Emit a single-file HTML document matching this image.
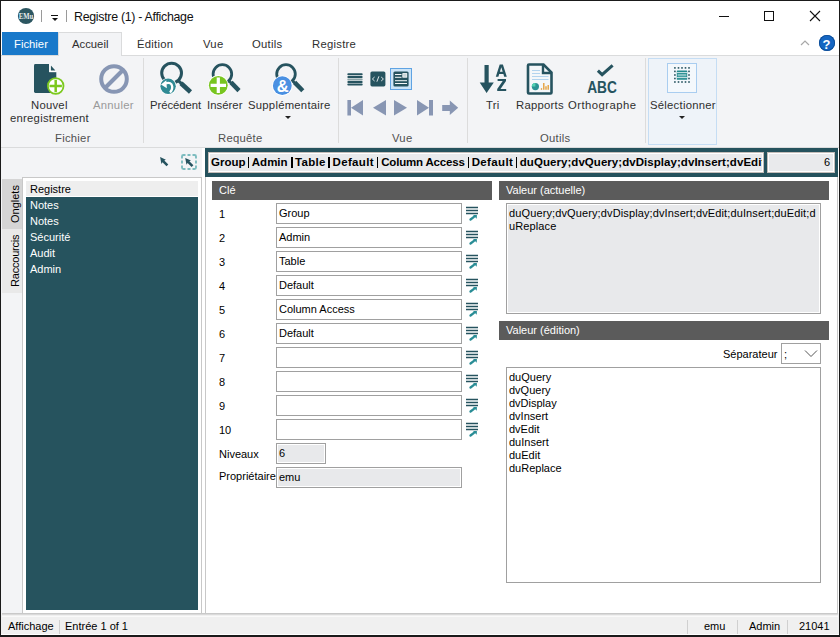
<!DOCTYPE html>
<html><head><meta charset="utf-8">
<style>
*{margin:0;padding:0;box-sizing:border-box}
html,body{width:840px;height:637px;overflow:hidden;background:#fff}
body{position:relative;font-family:"Liberation Sans",sans-serif;font-size:12px;color:#222}
.a{position:absolute}
.t{position:absolute;white-space:nowrap;line-height:1}
.ui{font-size:11.3px;letter-spacing:0.25px;color:#2f2f2f}
.f{font-size:11px;color:#000}
.w{color:#fff}
.tb{position:absolute;border:1px solid #a0a0a0;background:#fff}
.gray{background:#e8e9eb;box-shadow:inset 0 0 0 1px #fff}
.hdr{position:absolute;background:#5b5b5b;height:19px}
</style></head><body>
<!-- window border -->
<div class="a" style="left:0;top:0;width:840px;height:637px;border-left:1px solid #1a1a1a;border-top:1px solid #1a1a1a;border-right:1px solid #1a1a1a;border-bottom:2px solid #1a1a1a"></div>

<!-- title bar -->
<svg class="a" style="left:17px;top:7px" width="18" height="18" viewBox="0 0 18 18"><circle cx="9" cy="9" r="8.1" fill="#2c5661"/><text x="1.8" y="12" font-family="Liberation Serif" font-weight="bold" font-size="8.5" fill="#e8eeee" textLength="14.4" lengthAdjust="spacingAndGlyphs">EMu</text></svg>

<div class="a" style="left:41px;top:10px;width:1px;height:12px;background:#9a9a9a"></div>
<div class="a" style="left:51px;top:15px;width:7px;height:1px;background:#111"></div>
<div class="a" style="left:51.5px;top:18px;width:0;height:0;border-left:3px solid transparent;border-right:3px solid transparent;border-top:3px solid #111"></div>
<div class="a" style="left:66px;top:10px;width:1px;height:12px;background:#9a9a9a"></div>
<div class="t" style="left:74px;top:11px;font-size:12.4px;letter-spacing:-0.3px;color:#111">Registre (1) - Affichage</div>
<!-- window controls -->
<div class="a" style="left:719px;top:16px;width:10px;height:1px;background:#111"></div>
<div class="a" style="left:764px;top:11px;width:10px;height:10px;border:1px solid #111"></div>
<svg class="a" style="left:809px;top:10px" width="12" height="12" viewBox="0 0 12 12"><path d="M1 1L11 11M11 1L1 11" stroke="#111" stroke-width="1.1"/></svg>

<!-- ribbon tabs -->
<div class="a" style="left:2px;top:32px;width:56px;height:23px;background:#1979ca"></div>
<div class="t ui" style="left:14px;top:39px;color:#fff;letter-spacing:0">Fichier</div>
<div class="a" style="left:58px;top:32px;width:64px;height:24px;background:#f3f4f6;border:1px solid #dadbdc;border-bottom:none"></div>
<div class="t ui" style="left:72px;top:39px;letter-spacing:0">Accueil</div>
<div class="t ui" style="left:137px;top:39px">Édition</div>
<div class="t ui" style="left:203px;top:39px">Vue</div>
<div class="t ui" style="left:252px;top:39px">Outils</div>
<div class="t ui" style="left:312px;top:39px">Registre</div>
<svg class="a" style="left:800px;top:39px" width="10" height="8" viewBox="0 0 10 8"><path d="M1 6L5 2L9 6" stroke="#a8a8a8" stroke-width="1.2" fill="none"/></svg>
<div class="a" style="left:819px;top:35px;width:16px;height:16px;border-radius:50%;background:#1566c2;box-shadow:inset 0 0 0 0.8px #0b4a94"></div>
<div class="t" style="left:822.5px;top:38px;font-size:13px;font-weight:bold;color:#fff">?</div>

<!-- ribbon body -->
<div class="a" style="left:1px;top:55px;width:838px;height:93px;background:#f3f4f6;border-top:1px solid #dadbdc;border-bottom:1px solid #dadbdc"></div>
<div class="a" style="left:58px;top:55px;width:64px;height:1px;background:#f3f4f6;border-left:1px solid #dadbdc;border-right:1px solid #dadbdc"></div>
<!-- group separators -->
<div class="a" style="left:143px;top:58px;width:1px;height:85px;background:#dcdcdc"></div>
<div class="a" style="left:338px;top:58px;width:1px;height:85px;background:#dcdcdc"></div>
<div class="a" style="left:467px;top:58px;width:1px;height:85px;background:#dcdcdc"></div>
<div class="a" style="left:645px;top:58px;width:1px;height:85px;background:#dcdcdc"></div>
<!-- group labels -->
<div class="t ui" style="left:55px;top:133px;color:#505050">Fichier</div>
<div class="t ui" style="left:218px;top:133px;color:#505050">Requête</div>
<div class="t ui" style="left:392px;top:133px;color:#505050">Vue</div>
<div class="t ui" style="left:540px;top:133px;color:#505050">Outils</div>

<!-- Fichier group -->
<svg class="a" style="left:30px;top:60px" width="40" height="38" viewBox="0 0 40 38">
  <path d="M5.4 4H19.2L26.3 11.9V31.6Q26.3 33 24.9 33H5.4Q4 33 4 31.6V5.4Q4 4 5.4 4Z" fill="#26535f"/>
  <path d="M19.2 3.5L26.8 3.5V12.2H19.2Z" fill="#f3f4f6"/>
  <path d="M19.2 4H19.9L26.3 11.2V12H19.2Z" fill="#fff"/>
  <path d="M20.9 5.4L25.4 10.5H20.9Z" fill="#26535f"/>
  <circle cx="25.7" cy="26" r="7.8" fill="#fff" stroke="#7cc91f" stroke-width="1.8"/>
  <path d="M25.7 19.8V32.2M19.5 26H31.9" stroke="#7cc91f" stroke-width="2.5"/>
</svg>
<div class="t ui" style="left:31px;top:100px">Nouvel</div>
<div class="t ui" style="left:10px;top:113px">enregistrement</div>
<svg class="a" style="left:97px;top:62px" width="34" height="34" viewBox="0 0 34 34">
  <circle cx="17" cy="17" r="12.8" fill="none" stroke="#8796b4" stroke-width="4"/>
  <path d="M25.5 8.5L8.5 25.5" stroke="#8796b4" stroke-width="4"/>
</svg>
<div class="t ui" style="left:93px;top:100px;color:#9a9a9a">Annuler</div>

<!-- Requete group -->
<svg class="a" style="left:156px;top:60px" width="40" height="36" viewBox="0 0 40 36">
  <circle cx="15.6" cy="13.1" r="9.9" fill="none" stroke="#26535f" stroke-width="3"/>
  <path d="M21.5 19.8L25.5 23.6" stroke="#26535f" stroke-width="3"/>
  <path d="M25 23.3L34.5 32" stroke="#26535f" stroke-width="4.6"/>
  <circle cx="12.1" cy="26.3" r="8.4" fill="#fff"/>
  <circle cx="12.1" cy="26.3" r="7.7" fill="#2f8a94"/>
  <path d="M9.5 23.3Q15.5 21.5 16.2 26.5Q16.6 30 14 32.5" stroke="#fff" stroke-width="2.3" fill="none"/>
  <path d="M5 24.6L10.3 20.2L10.8 28.2Z" fill="#fff"/>
</svg>
<div class="t ui" style="left:150px;top:100px;letter-spacing:-0.05px">Précédent</div>
<svg class="a" style="left:206px;top:60px" width="40" height="36" viewBox="0 0 40 36">
  <circle cx="16.4" cy="14" r="9.3" fill="none" stroke="#26535f" stroke-width="2.8"/>
  <path d="M22.4 20.3L25.6 23.4" stroke="#26535f" stroke-width="2.8"/>
  <path d="M25 22.4L33 30.6" stroke="#26535f" stroke-width="4.4"/>
  <circle cx="12.3" cy="25.3" r="10.2" fill="#fff"/>
  <circle cx="12.3" cy="25.3" r="9.4" fill="#78c520"/>
  <path d="M12.3 17.6V33M4.6 25.3H20" stroke="#fff" stroke-width="3.2"/>
</svg>
<div class="t ui" style="left:207px;top:100px;letter-spacing:0.05px">Insérer</div>
<svg class="a" style="left:270px;top:60px" width="40" height="36" viewBox="0 0 40 36">
  <circle cx="16" cy="14" r="9.3" fill="none" stroke="#26535f" stroke-width="2.8"/>
  <path d="M22 20.3L25.2 23.4" stroke="#26535f" stroke-width="2.8"/>
  <path d="M24.6 22.4L32.8 30.8" stroke="#26535f" stroke-width="4.4"/>
  <circle cx="12.3" cy="25.7" r="10.2" fill="#fff"/>
  <circle cx="12.3" cy="25.7" r="9.4" fill="#4a90e2"/>
  <text x="12.6" y="31.6" text-anchor="middle" font-family="Liberation Sans" font-weight="bold" font-size="16.5" fill="#fff">&amp;</text>
</svg>
<div class="t ui" style="left:248px;top:100px">Supplémentaire</div>
<div class="a" style="left:285px;top:116px;width:0;height:0;border-left:3px solid transparent;border-right:3px solid transparent;border-top:3px solid #222"></div>

<!-- Vue group -->
<svg class="a" style="left:347px;top:72px" width="16" height="14" viewBox="0 0 16 14">
  <rect x="0.3" y="1.2" width="15.4" height="2" rx="1" fill="#26535f"/>
  <rect x="0.3" y="3.9" width="15.4" height="2" rx="1" fill="#26535f"/>
  <rect x="0.3" y="6.5" width="15.4" height="1.9" rx="0.9" fill="#8aa2a6"/>
  <rect x="0.3" y="8.9" width="15.4" height="2" rx="1" fill="#26535f"/>
  <rect x="0.3" y="11.5" width="15.4" height="2" rx="1" fill="#26535f"/>
</svg>
<svg class="a" style="left:370px;top:71px" width="16" height="16" viewBox="0 0 16 16">
  <rect x="0.4" y="0.4" width="15" height="15" rx="1.6" fill="#26535f"/>
  <path d="M4.6 6L2.4 8L4.6 10M11.2 6L13.4 8L11.2 10M8.9 5.3L6.9 10.7" stroke="#fff" stroke-width="0.85" fill="none"/>
</svg>
<div class="a" style="left:390px;top:68px;width:22px;height:22px;background:#cce4f7;border:1px solid #5fa3e3"></div>
<svg class="a" style="left:393px;top:71px" width="16" height="16" viewBox="0 0 16 16">
  <rect x="0.4" y="0.5" width="15.2" height="15" rx="1.5" fill="#26535f"/>
  <path d="M2 3.5H8.5M2 6.3H8.5M2 9.7H14M2 12.5H14" stroke="#fff" stroke-width="0.95"/>
  <rect x="9.8" y="2.6" width="4" height="3.6" fill="#c9d6d9" stroke="#fff" stroke-width="0.8"/>
</svg>
<svg class="a" style="left:345px;top:98px" width="120" height="20" viewBox="0 0 120 20">
  <rect x="2.4" y="2" width="3.6" height="15.5" fill="#8896b3"/>
  <path d="M6 9.75L18 2V17.5Z" fill="#8896b3"/>
  <path d="M28 9.75L41 2V17.5Z" fill="#8896b3"/>
  <path d="M49 2L62 9.75L49 17.5Z" fill="#8896b3"/>
  <path d="M72 2L84 9.75L72 17.5Z" fill="#8896b3"/>
  <rect x="84" y="2" width="4" height="15.5" fill="#8896b3"/>
  <path d="M97.2 6.9H104.8V2.5L113.2 9.75L104.8 17V12.9H97.2Z" fill="#8896b3"/>
</svg>

<!-- Outils group -->
<svg class="a" style="left:477px;top:62px" width="34" height="34" viewBox="0 0 34 34">
  <path d="M7.5 3H11.7V20.6H16.8L9.6 31L2.7 20.6H7.5Z" fill="#26535f"/>
  <path d="M18.8 14.7L22.7 2.5H25.9L29.8 14.7H27.2L26.4 12.1H22.2L21.4 14.7ZM22.9 9.8H25.7L24.3 5.2Z" fill="#26535f"/>
  <path d="M20.6 16.9H29V19L23.5 26.9H29.2V29.1H20.2V27L25.7 19.1H20.6Z" fill="#26535f"/>
</svg>
<div class="t ui" style="left:486px;top:100px">Tri</div>
<svg class="a" style="left:526px;top:62px" width="28" height="34" viewBox="0 0 28 34">
  <path d="M3 2.5H17.5L25.5 10.5V30.5Q25.5 31.5 24.5 31.5H3Q2 31.5 2 30.5V3.5Q2 2.5 3 2.5Z" fill="#f4f7f9" stroke="#26535f" stroke-width="2.6"/>
  <path d="M17 2.5V11H25.5" fill="none" stroke="#26535f" stroke-width="2.4"/>
  <path d="M6 8.5H14M6 11.5H14M6 14.5H22.5M6 17.5H22.5" stroke="#b3d4ee" stroke-width="1"/>
  <circle cx="9.4" cy="24.6" r="3.6" fill="#2a9393"/>
  <path d="M9.4 24.6H5.8A3.6 3.6 0 0 1 9.4 21Z" fill="#52d2b2"/>
  <path d="M15.5 27.8V26.3M17.8 27.8V21M20 27.8V24.3M22.2 27.8V23" stroke="#e39a2e" stroke-width="1.3"/>
</svg>
<div class="t ui" style="left:516px;top:100px">Rapports</div>
<svg class="a" style="left:585px;top:62px" width="34" height="34" viewBox="0 0 34 34">
  <path d="M12.9 8.7L17.1 12.6L27.6 3.3" stroke="#26535f" stroke-width="3.1" fill="none"/>
  <text x="2.2" y="31" font-family="Liberation Sans" font-weight="bold" font-size="15.6" fill="#26535f" textLength="29.7" lengthAdjust="spacingAndGlyphs" transform="translate(0 -2.9) scale(1 1.11)">ABC</text>
</svg>
<div class="t ui" style="left:568px;top:100px;letter-spacing:0.45px">Orthographe</div>

<!-- Selectionner -->
<div class="a" style="left:648px;top:58px;width:69px;height:87px;background:#eef3f9;border:1px solid #c5ddf4"></div>
<div class="a" style="left:667px;top:63px;width:30px;height:30px;background:#f4f8fc;border:1px solid #a9cdf0"></div>
<svg class="a" style="left:673px;top:66px" width="18" height="18" viewBox="0 0 18 18"><rect x="1.0999999999999999" y="1.0999999999999999" width="1.6" height="1.6" fill="#26535f"/><rect x="1.0999999999999999" y="15.2" width="1.6" height="1.6" fill="#26535f"/><rect x="4.7" y="1.0999999999999999" width="1.6" height="1.6" fill="#26535f"/><rect x="4.7" y="15.2" width="1.6" height="1.6" fill="#26535f"/><rect x="8.2" y="1.0999999999999999" width="1.6" height="1.6" fill="#26535f"/><rect x="8.2" y="15.2" width="1.6" height="1.6" fill="#26535f"/><rect x="11.7" y="1.0999999999999999" width="1.6" height="1.6" fill="#26535f"/><rect x="11.7" y="15.2" width="1.6" height="1.6" fill="#26535f"/><rect x="15.2" y="1.0999999999999999" width="1.6" height="1.6" fill="#26535f"/><rect x="15.2" y="15.2" width="1.6" height="1.6" fill="#26535f"/><rect x="1.0999999999999999" y="4.6000000000000005" width="1.6" height="1.6" fill="#26535f"/><rect x="15.2" y="4.6000000000000005" width="1.6" height="1.6" fill="#26535f"/><rect x="1.0999999999999999" y="8.2" width="1.6" height="1.6" fill="#26535f"/><rect x="15.2" y="8.2" width="1.6" height="1.6" fill="#26535f"/><rect x="1.0999999999999999" y="11.7" width="1.6" height="1.6" fill="#26535f"/><rect x="15.2" y="11.7" width="1.6" height="1.6" fill="#26535f"/>
  <rect x="3.8" y="4.4" width="10.4" height="9.4" rx="0.6" fill="#238a8e"/>
  <path d="M3.8 6.6H14.2M3.8 11.6H14.2" stroke="#e6f1f2" stroke-width="0.9"/>
  <rect x="4.6" y="8" width="8.8" height="2.4" fill="#83c1c2"/>
</svg>
<div class="t ui" style="left:650px;top:100px">Sélectionner</div>
<div class="a" style="left:679px;top:116px;width:0;height:0;border-left:3px solid transparent;border-right:3px solid transparent;border-top:3px solid #222"></div>

<!-- below ribbon: left sidebar area -->
<div class="a" style="left:1px;top:148px;width:201px;height:466px;background:#f3f4f6"></div>
<div class="a" style="left:202px;top:148px;width:3px;height:466px;background:#fff"></div>
<svg class="a" style="left:159px;top:156px" width="12" height="12" viewBox="0 0 12 12"><path d="M1.1 1.1L6.9 3.7L5.3 4.5L9.3 8.5L7.5 10.3L3.5 6.3L2.4 7.9Z" fill="#26535f"/></svg>
<svg class="a" style="left:180px;top:153px" width="18" height="18" viewBox="0 0 18 18">
  <path d="M2 5.5V3.5Q2 2 3.5 2H5.5M7.5 2H10.5M12.5 2H14.5Q16 2 16 3.5V5.5M16 7.5V10.5M16 12.5V14.5Q16 16 14.5 16H12.5M10.5 16H7.5M5.5 16H3.5Q2 16 2 14.5V12.5M2 10.5V7.5" stroke="#7dbcbf" stroke-width="1.9" fill="none"/>
  <path d="M1.1 1.1L6.9 3.7L5.3 4.5L9.3 8.5L7.5 10.3L3.5 6.3L2.4 7.9Z" transform="translate(4.1 3.8)" fill="#26535f"/>
</svg>
<!-- vertical tabs -->
<div class="a" style="left:2px;top:179px;width:20px;height:50px;background:#d5d5d5"></div>
<div class="a" style="left:2px;top:229px;width:20px;height:64px;background:#e9e9e9"></div>
<div class="t f" style="left:10px;top:222.5px;transform-origin:0 0;transform:rotate(-90deg)">Onglets</div>
<div class="t f" style="left:10px;top:287px;transform-origin:0 0;transform:rotate(-90deg);letter-spacing:-0.2px">Raccourcis</div>
<!-- list panel -->
<div class="a" style="left:22px;top:177px;width:180px;height:437px;background:#fff;border-left:1px solid #c8c8c8;border-top:1px solid #c8c8c8;border-right:1px solid #c8c8c8"></div>
<div class="a" style="left:26px;top:181px;width:172px;height:15px;background:#eeeeee"></div>
<div class="a" style="left:26px;top:197px;width:172px;height:413px;background:#26535e"></div>
<div class="t f" style="left:30px;top:184px">Registre</div>
<div class="t f w" style="left:30px;top:200px">Notes</div>
<div class="t f w" style="left:30px;top:216px">Notes</div>
<div class="t f w" style="left:30px;top:232px">Sécurité</div>
<div class="t f w" style="left:30px;top:248px">Audit</div>
<div class="t f w" style="left:30px;top:264px">Admin</div>

<!-- address bar -->
<div class="a" style="left:205px;top:148px;width:633px;height:29px;background:#25525d"></div>
<div class="a" style="left:208px;top:152px;width:556px;height:21px;background:#c4bdb9;padding:1px"><div style="width:100%;height:100%;background:#e9eaec;border:1px solid #fff"></div></div>
<div class="a" style="left:211px;top:154px;width:551px;height:17px;overflow:hidden">
<div class="t" style="left:-0.0px;top:3px;font-size:11.5px;font-weight:bold;color:#000">Group</div>
<div class="t" style="left:40.8px;top:3px;font-size:11.5px;font-weight:bold;color:#000;letter-spacing:0px">Admin</div>
<div class="t" style="left:84.0px;top:3px;font-size:11.5px;font-weight:bold;color:#000;letter-spacing:0.3px">Table</div>
<div class="t" style="left:121.5px;top:3px;font-size:11.5px;font-weight:bold;color:#000;letter-spacing:0.35px">Default</div>
<div class="t" style="left:170.2px;top:3px;font-size:11.5px;font-weight:bold;color:#000;letter-spacing:-0.18px">Column Access</div>
<div class="t" style="left:260.7px;top:3px;font-size:11.5px;font-weight:bold;color:#000;letter-spacing:0.35px">Default</div>
<div class="t" style="left:308.8px;top:3px;font-size:11.5px;font-weight:bold;color:#000;letter-spacing:0.05px">duQuery;dvQuery;dvDisplay;dvInsert;dvEdit;duInsert</div>
<div class="a" style="left:37.0px;top:3px;width:1.3px;height:11px;background:#000"></div>
<div class="a" style="left:80.3px;top:3px;width:1.3px;height:11px;background:#000"></div>
<div class="a" style="left:117.3px;top:3px;width:1.3px;height:11px;background:#000"></div>
<div class="a" style="left:166.0px;top:3px;width:1.3px;height:11px;background:#000"></div>
<div class="a" style="left:256.6px;top:3px;width:1.3px;height:11px;background:#000"></div>
<div class="a" style="left:304.7px;top:3px;width:1.3px;height:11px;background:#000"></div>
</div>
<div class="a" style="left:767px;top:152px;width:68px;height:21px;background:#c4bdb9;padding:1px"><div style="width:100%;height:100%;background:#e9eaec;border:1px solid #fff"></div></div>
<div class="t f" style="left:824px;top:157px">6</div>

<!-- main panel -->
<div class="a" style="left:205px;top:177px;width:633px;height:437px;background:#fff;border-left:1px solid #c8c8c8;border-right:1px solid #c8c8c8;border-bottom:1px solid #c8c8c8"></div>
<div class="hdr" style="left:212px;top:181px;width:280px"></div>
<div class="t f w" style="left:219px;top:185px">Clé</div>
<div class="hdr" style="left:499px;top:181px;width:330px"></div>
<div class="t f w" style="left:506px;top:185px">Valeur (actuelle)</div>
<div class="hdr" style="left:499px;top:321px;width:330px"></div>
<div class="t f w" style="left:506px;top:325px">Valeur (édition)</div>

<div class="t f" style="left:219px;top:209px">1</div>
<div class="tb" style="left:276px;top:203px;width:186px;height:21px"></div>
<div class="t f" style="left:279px;top:208px">Group</div>
<svg class="a" style="left:465px;top:205px" width="15" height="17" viewBox="0 0 15 17"><path d="M1 2.5H13M1 5.5H13M1 8.5H13" stroke="#26535f" stroke-width="1.4"/><path d="M5.5 14.5L9 11.8" stroke="#2a8d96" stroke-width="2.3" stroke-linecap="round"/><path d="M8 10.1L11.9 9.9L11.7 13.8Z" fill="#2a8d96"/></svg>
<div class="t f" style="left:219px;top:233px">2</div>
<div class="tb" style="left:276px;top:227px;width:186px;height:21px"></div>
<div class="t f" style="left:279px;top:232px">Admin</div>
<svg class="a" style="left:465px;top:229px" width="15" height="17" viewBox="0 0 15 17"><path d="M1 2.5H13M1 5.5H13M1 8.5H13" stroke="#26535f" stroke-width="1.4"/><path d="M5.5 14.5L9 11.8" stroke="#2a8d96" stroke-width="2.3" stroke-linecap="round"/><path d="M8 10.1L11.9 9.9L11.7 13.8Z" fill="#2a8d96"/></svg>
<div class="t f" style="left:219px;top:257px">3</div>
<div class="tb" style="left:276px;top:251px;width:186px;height:21px"></div>
<div class="t f" style="left:279px;top:256px">Table</div>
<svg class="a" style="left:465px;top:253px" width="15" height="17" viewBox="0 0 15 17"><path d="M1 2.5H13M1 5.5H13M1 8.5H13" stroke="#26535f" stroke-width="1.4"/><path d="M5.5 14.5L9 11.8" stroke="#2a8d96" stroke-width="2.3" stroke-linecap="round"/><path d="M8 10.1L11.9 9.9L11.7 13.8Z" fill="#2a8d96"/></svg>
<div class="t f" style="left:219px;top:281px">4</div>
<div class="tb" style="left:276px;top:275px;width:186px;height:21px"></div>
<div class="t f" style="left:279px;top:280px">Default</div>
<svg class="a" style="left:465px;top:277px" width="15" height="17" viewBox="0 0 15 17"><path d="M1 2.5H13M1 5.5H13M1 8.5H13" stroke="#26535f" stroke-width="1.4"/><path d="M5.5 14.5L9 11.8" stroke="#2a8d96" stroke-width="2.3" stroke-linecap="round"/><path d="M8 10.1L11.9 9.9L11.7 13.8Z" fill="#2a8d96"/></svg>
<div class="t f" style="left:219px;top:305px">5</div>
<div class="tb" style="left:276px;top:299px;width:186px;height:21px"></div>
<div class="t f" style="left:279px;top:304px">Column Access</div>
<svg class="a" style="left:465px;top:301px" width="15" height="17" viewBox="0 0 15 17"><path d="M1 2.5H13M1 5.5H13M1 8.5H13" stroke="#26535f" stroke-width="1.4"/><path d="M5.5 14.5L9 11.8" stroke="#2a8d96" stroke-width="2.3" stroke-linecap="round"/><path d="M8 10.1L11.9 9.9L11.7 13.8Z" fill="#2a8d96"/></svg>
<div class="t f" style="left:219px;top:329px">6</div>
<div class="tb" style="left:276px;top:323px;width:186px;height:21px"></div>
<div class="t f" style="left:279px;top:328px">Default</div>
<svg class="a" style="left:465px;top:325px" width="15" height="17" viewBox="0 0 15 17"><path d="M1 2.5H13M1 5.5H13M1 8.5H13" stroke="#26535f" stroke-width="1.4"/><path d="M5.5 14.5L9 11.8" stroke="#2a8d96" stroke-width="2.3" stroke-linecap="round"/><path d="M8 10.1L11.9 9.9L11.7 13.8Z" fill="#2a8d96"/></svg>
<div class="t f" style="left:219px;top:353px">7</div>
<div class="tb" style="left:276px;top:347px;width:186px;height:21px"></div>
<svg class="a" style="left:465px;top:349px" width="15" height="17" viewBox="0 0 15 17"><path d="M1 2.5H13M1 5.5H13M1 8.5H13" stroke="#26535f" stroke-width="1.4"/><path d="M5.5 14.5L9 11.8" stroke="#2a8d96" stroke-width="2.3" stroke-linecap="round"/><path d="M8 10.1L11.9 9.9L11.7 13.8Z" fill="#2a8d96"/></svg>
<div class="t f" style="left:219px;top:377px">8</div>
<div class="tb" style="left:276px;top:371px;width:186px;height:21px"></div>
<svg class="a" style="left:465px;top:373px" width="15" height="17" viewBox="0 0 15 17"><path d="M1 2.5H13M1 5.5H13M1 8.5H13" stroke="#26535f" stroke-width="1.4"/><path d="M5.5 14.5L9 11.8" stroke="#2a8d96" stroke-width="2.3" stroke-linecap="round"/><path d="M8 10.1L11.9 9.9L11.7 13.8Z" fill="#2a8d96"/></svg>
<div class="t f" style="left:219px;top:401px">9</div>
<div class="tb" style="left:276px;top:395px;width:186px;height:21px"></div>
<svg class="a" style="left:465px;top:397px" width="15" height="17" viewBox="0 0 15 17"><path d="M1 2.5H13M1 5.5H13M1 8.5H13" stroke="#26535f" stroke-width="1.4"/><path d="M5.5 14.5L9 11.8" stroke="#2a8d96" stroke-width="2.3" stroke-linecap="round"/><path d="M8 10.1L11.9 9.9L11.7 13.8Z" fill="#2a8d96"/></svg>
<div class="t f" style="left:219px;top:425px">10</div>
<div class="tb" style="left:276px;top:419px;width:186px;height:21px"></div>
<svg class="a" style="left:465px;top:421px" width="15" height="17" viewBox="0 0 15 17"><path d="M1 2.5H13M1 5.5H13M1 8.5H13" stroke="#26535f" stroke-width="1.4"/><path d="M5.5 14.5L9 11.8" stroke="#2a8d96" stroke-width="2.3" stroke-linecap="round"/><path d="M8 10.1L11.9 9.9L11.7 13.8Z" fill="#2a8d96"/></svg>

<div class="t f" style="left:219px;top:449px">Niveaux</div>
<div class="tb gray" style="left:276px;top:443px;width:50px;height:21px"></div>
<div class="t f" style="left:279px;top:448px">6</div>
<div class="t f" style="left:219px;top:471px">Propriétaire</div>
<div class="tb gray" style="left:276px;top:467px;width:186px;height:21px"></div>
<div class="t f" style="left:279px;top:472px">emu</div>

<div class="tb gray" style="left:506px;top:203px;width:315px;height:111px"></div>
<div class="t f" style="left:509px;top:207px;line-height:13px;letter-spacing:0.12px">duQuery;dvQuery;dvDisplay;dvInsert;dvEdit;duInsert;duEdit;d<br>uReplace</div>

<div class="t f" style="left:723px;top:349px">Séparateur</div>
<div class="tb" style="left:781px;top:343px;width:40px;height:21px"></div>
<div class="t f" style="left:784px;top:349px">;</div>
<svg class="a" style="left:804px;top:349px" width="14" height="9" viewBox="0 0 14 9"><path d="M1 1.5L7 7.5L13 1.5" stroke="#555" stroke-width="1" fill="none"/></svg>

<div class="tb" style="left:506px;top:367px;width:315px;height:216px"></div>
<div class="t f" style="left:509px;top:371px;line-height:13px">duQuery<br>dvQuery<br>dvDisplay<br>dvInsert<br>dvEdit<br>duInsert<br>duEdit<br>duReplace</div>

<!-- status bar -->
<div class="a" style="left:1px;top:613px;width:838px;height:22px;background:#f0f0f0"></div>
<div class="a" style="left:2px;top:613px;width:836px;height:1px;background:#c9c9c9"></div>
<div class="a" style="left:2px;top:614px;width:836px;height:1px;background:#dadada"></div>
<div class="a" style="left:2px;top:616px;width:836px;height:1px;background:#fafafa"></div>
<div class="a" style="left:1px;top:634px;width:838px;height:1px;background:#fff"></div>
<div class="t f" style="left:8px;top:621px">Affichage</div>
<div class="a" style="left:59px;top:620px;width:1px;height:14px;background:#d0d0d0"></div>
<div class="t f" style="left:65px;top:621px">Entrée 1 of 1</div>
<div class="a" style="left:687px;top:620px;width:1px;height:14px;background:#d0d0d0"></div>
<div class="t f" style="left:704px;top:621px">emu</div>
<div class="a" style="left:737px;top:620px;width:1px;height:14px;background:#d0d0d0"></div>
<div class="t f" style="left:749px;top:621px">Admin</div>
<div class="a" style="left:787px;top:620px;width:1px;height:14px;background:#d0d0d0"></div>
<div class="t f" style="left:799px;top:621px">21041</div>
</body></html>
